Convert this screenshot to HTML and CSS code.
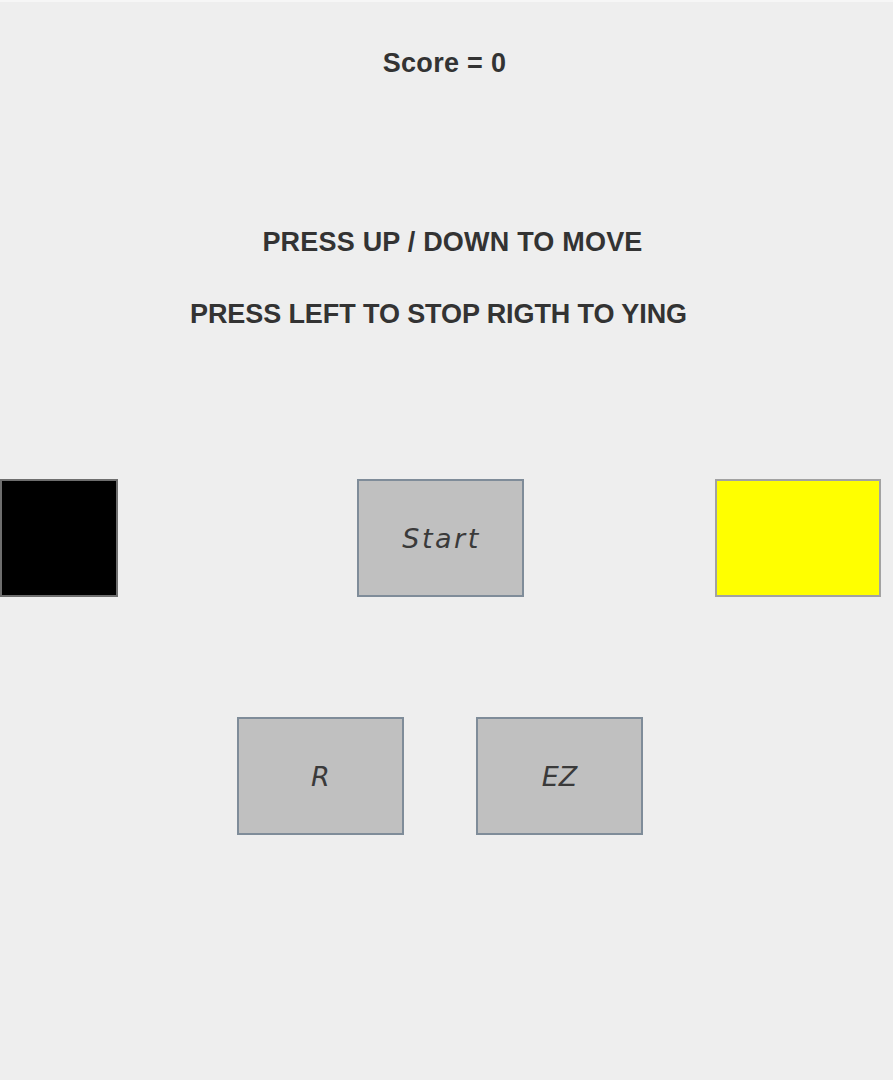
FILE: index.html
```html
<!DOCTYPE html>
<html>
<head>
<meta charset="utf-8">
<link rel="stylesheet" href="styles.css">
</head>
<body>
<div class="frame">
  <div class="score">Score = 0</div>
  <div class="instr instr-first">PRESS UP / DOWN TO MOVE</div>
  <div class="instr instr-second">PRESS LEFT TO STOP RIGTH TO YING</div>
  <div class="row row-top">
    <div class="box box-black"></div>
    <div class="btn btn-start">Start</div>
    <div class="box box-yellow"></div>
  </div>
  <div class="row row-bottom">
    <div class="btn">R</div>
    <div class="btn btn-ez">EZ</div>
  </div>
</div>
</body>
</html>
```
FILE: styles.css
```css
html, body {
  margin: 0;
  padding: 0;
  background: #eeeeee;
}
.frame {
  width: 893px;
  height: 1080px;
  box-sizing: border-box;
  border-top: 2px solid #f6f6f6;
  background: #eeeeee;
  overflow: hidden;
  font-family: "Liberation Sans", Arial, sans-serif;
  color: #333333;
}
.score {
  margin-top: 46px;
  text-align: center;
  font-weight: bold;
  font-size: 27px;
  line-height: 31px;
  height: 31px;
  letter-spacing: 0.3px;
  margin-left: -4px;
}
.instr {
  text-align: center;
  font-weight: bold;
  font-size: 27px;
  line-height: 31px;
  height: 31px;
}
.instr-first {
  margin-top: 148px;
  padding-left: 12px;
  letter-spacing: 0.2px;
}
.instr-second {
  margin-top: 41px;
  margin-left: -16px;
  letter-spacing: -0.1px;
}
.row {
  display: flex;
  align-items: flex-start;
}
.row-top {
  margin-top: 149px;
}
.row-bottom {
  margin-top: 120px;
  padding-left: 237px;
}
.box {
  box-sizing: border-box;
  height: 118px;
}
.box-black {
  width: 118px;
  background: #000000;
  border: 2px solid #6e6e6e;
}
.box-yellow {
  width: 166px;
  margin-left: 191px;
  background: #ffff00;
  border: 2px solid #a2a2a2;
}
.btn {
  box-sizing: border-box;
  width: 167px;
  height: 118px;
  background: #c0c0c0;
  border: 2px solid #7f8c99;
  display: flex;
  align-items: center;
  justify-content: center;
  font-family: "DejaVu Sans", sans-serif;
  font-style: italic;
  font-size: 27px;
  color: #3a3a3a;
}
.btn-start {
  margin-left: 239px;
  letter-spacing: 2.5px;
  padding-left: 2px;
}
.btn-ez {
  margin-left: 72px;
}
```
